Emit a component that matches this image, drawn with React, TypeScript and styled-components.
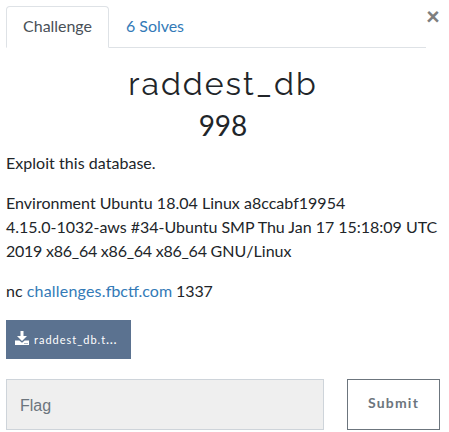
import React from 'react';
import styled, { createGlobalStyle } from 'styled-components';

const Global = createGlobalStyle`
  *{box-sizing:border-box}
  body{margin:0;background:#fff;color:#212529;font:16px/24px Lato,sans-serif;overflow:hidden}
`;
const Modal = styled.main`height:432px;padding:6px 9px 0 6px;`;
const Top = styled.header`display:flex;height:42px;`;
const Tabs = styled.nav`display:flex;width:420px;border-bottom:1px solid #dee2e6;`;
const Tab = styled.button<{ $active?: boolean }>`
  height:42px;width:${p => p.$active ? '103px' : '92px'};padding:0 0 2px;white-space:nowrap;font:16px/24px Lato,sans-serif;letter-spacing:-.04px;border-radius:4px 4px 0 0;
  border:1px solid;border-color:${p => p.$active ? '#dee2e6 #dee2e6 #fff' : 'transparent'};
  background:${p => p.$active ? '#fff' : 'transparent'};color:${p => p.$active ? '#495057' : '#337ab7'};
`;
const Close = styled.button`border:0;background:none;padding:0;width:14px;height:20px;font:900 24px/20px Lato,sans-serif;color:#7f7f7f;`;
const Title = styled.h2`margin:17px 0 0;text-align:center;font:400 32px/38px Raleway,sans-serif;letter-spacing:2px;`;
const Score = styled.h3`margin:5px 0 0;text-align:center;font:400 28px/34px Lato,sans-serif;`;
const Text = styled.p`margin:0 0 16px;white-space:nowrap;`;
const Line = styled.span<{ $track: number }>`display:block;letter-spacing:${p => p.$track}px;`;
const Tracked = styled.span<{ $track: number }>`letter-spacing:${p => p.$track}px;`;
const Body = styled.section`margin-top:9px;`;
const Link = styled.a`color:#337ab7;`;
const File = styled.button`display:flex;align-items:center;gap:5px;width:125px;height:39px;margin-top:17px;padding:0 9px;border:0;background:#5b7290;color:#fff;font:11px/16px Lato,sans-serif;letter-spacing:1px;white-space:nowrap;`;
const Ellipsis = styled.span`font-weight:700;letter-spacing:1.2px;`;
const Icon = styled.svg`width:14px;height:14px;flex:none;margin-top:-3px;`;
const Form = styled.form`display:flex;justify-content:space-between;margin-top:20px;`;
const Flag = styled.input`width:318px;height:51px;padding:2px 13px 0;border:1px solid #ced4da;background:#efefef;font:16px "Liberation Sans",sans-serif;&::placeholder{color:#6c757d;opacity:1}`;
const Submit = styled.button`width:93px;height:51px;padding:0 0 4px;border:1px solid #6c757d;background:#fff;color:#6c757d;font:700 14px Lato,sans-serif;letter-spacing:1.2px;`;

export default function App() {
  return <><Global /><Modal>
    <Top><Tabs><Tab $active>Challenge</Tab><Tab>6 Solves</Tab></Tabs><Close>×</Close></Top>
    <Title>raddest_db</Title><Score>998</Score>
    <Body>
      <Text><Tracked $track={0.04}>Exploit this database.</Tracked></Text>
      <Text>
        <Line $track={0.01}>Environment Ubuntu 18.04 Linux a8ccabf19954</Line>
        <Line $track={-0.02}>4.15.0-1032-aws #34-Ubuntu SMP Thu Jan 17 15:18:09 UTC</Line>
        <Line $track={0.05}><Tracked $track={-0.24}>2019 x86_64 x86_64 x86_64 </Tracked>GNU/Linux</Line>
      </Text>
      <Text>nc <Link><Tracked $track={0.2}>challenges.</Tracked>fbctf.com</Link><Tracked $track={-0.1}> 1337</Tracked></Text>
    </Body>
    <File><Icon viewBox="0 0 14 14" fill="#fff"><path d="M5.5 0h3v5H12L7 10 2 5h3.5z" /><path fillRule="evenodd" d="M0 9.5h4.3L7 11.7 9.7 9.5H14V14H0zM9.5 12v1h1v-1zm2 0v1h1v-1z" /></Icon><span>raddest_db.t<Ellipsis>...</Ellipsis></span></File>
    <Form><Flag placeholder="Flag" /><Submit type="button">Submit</Submit></Form>
  </Modal></>;
}
